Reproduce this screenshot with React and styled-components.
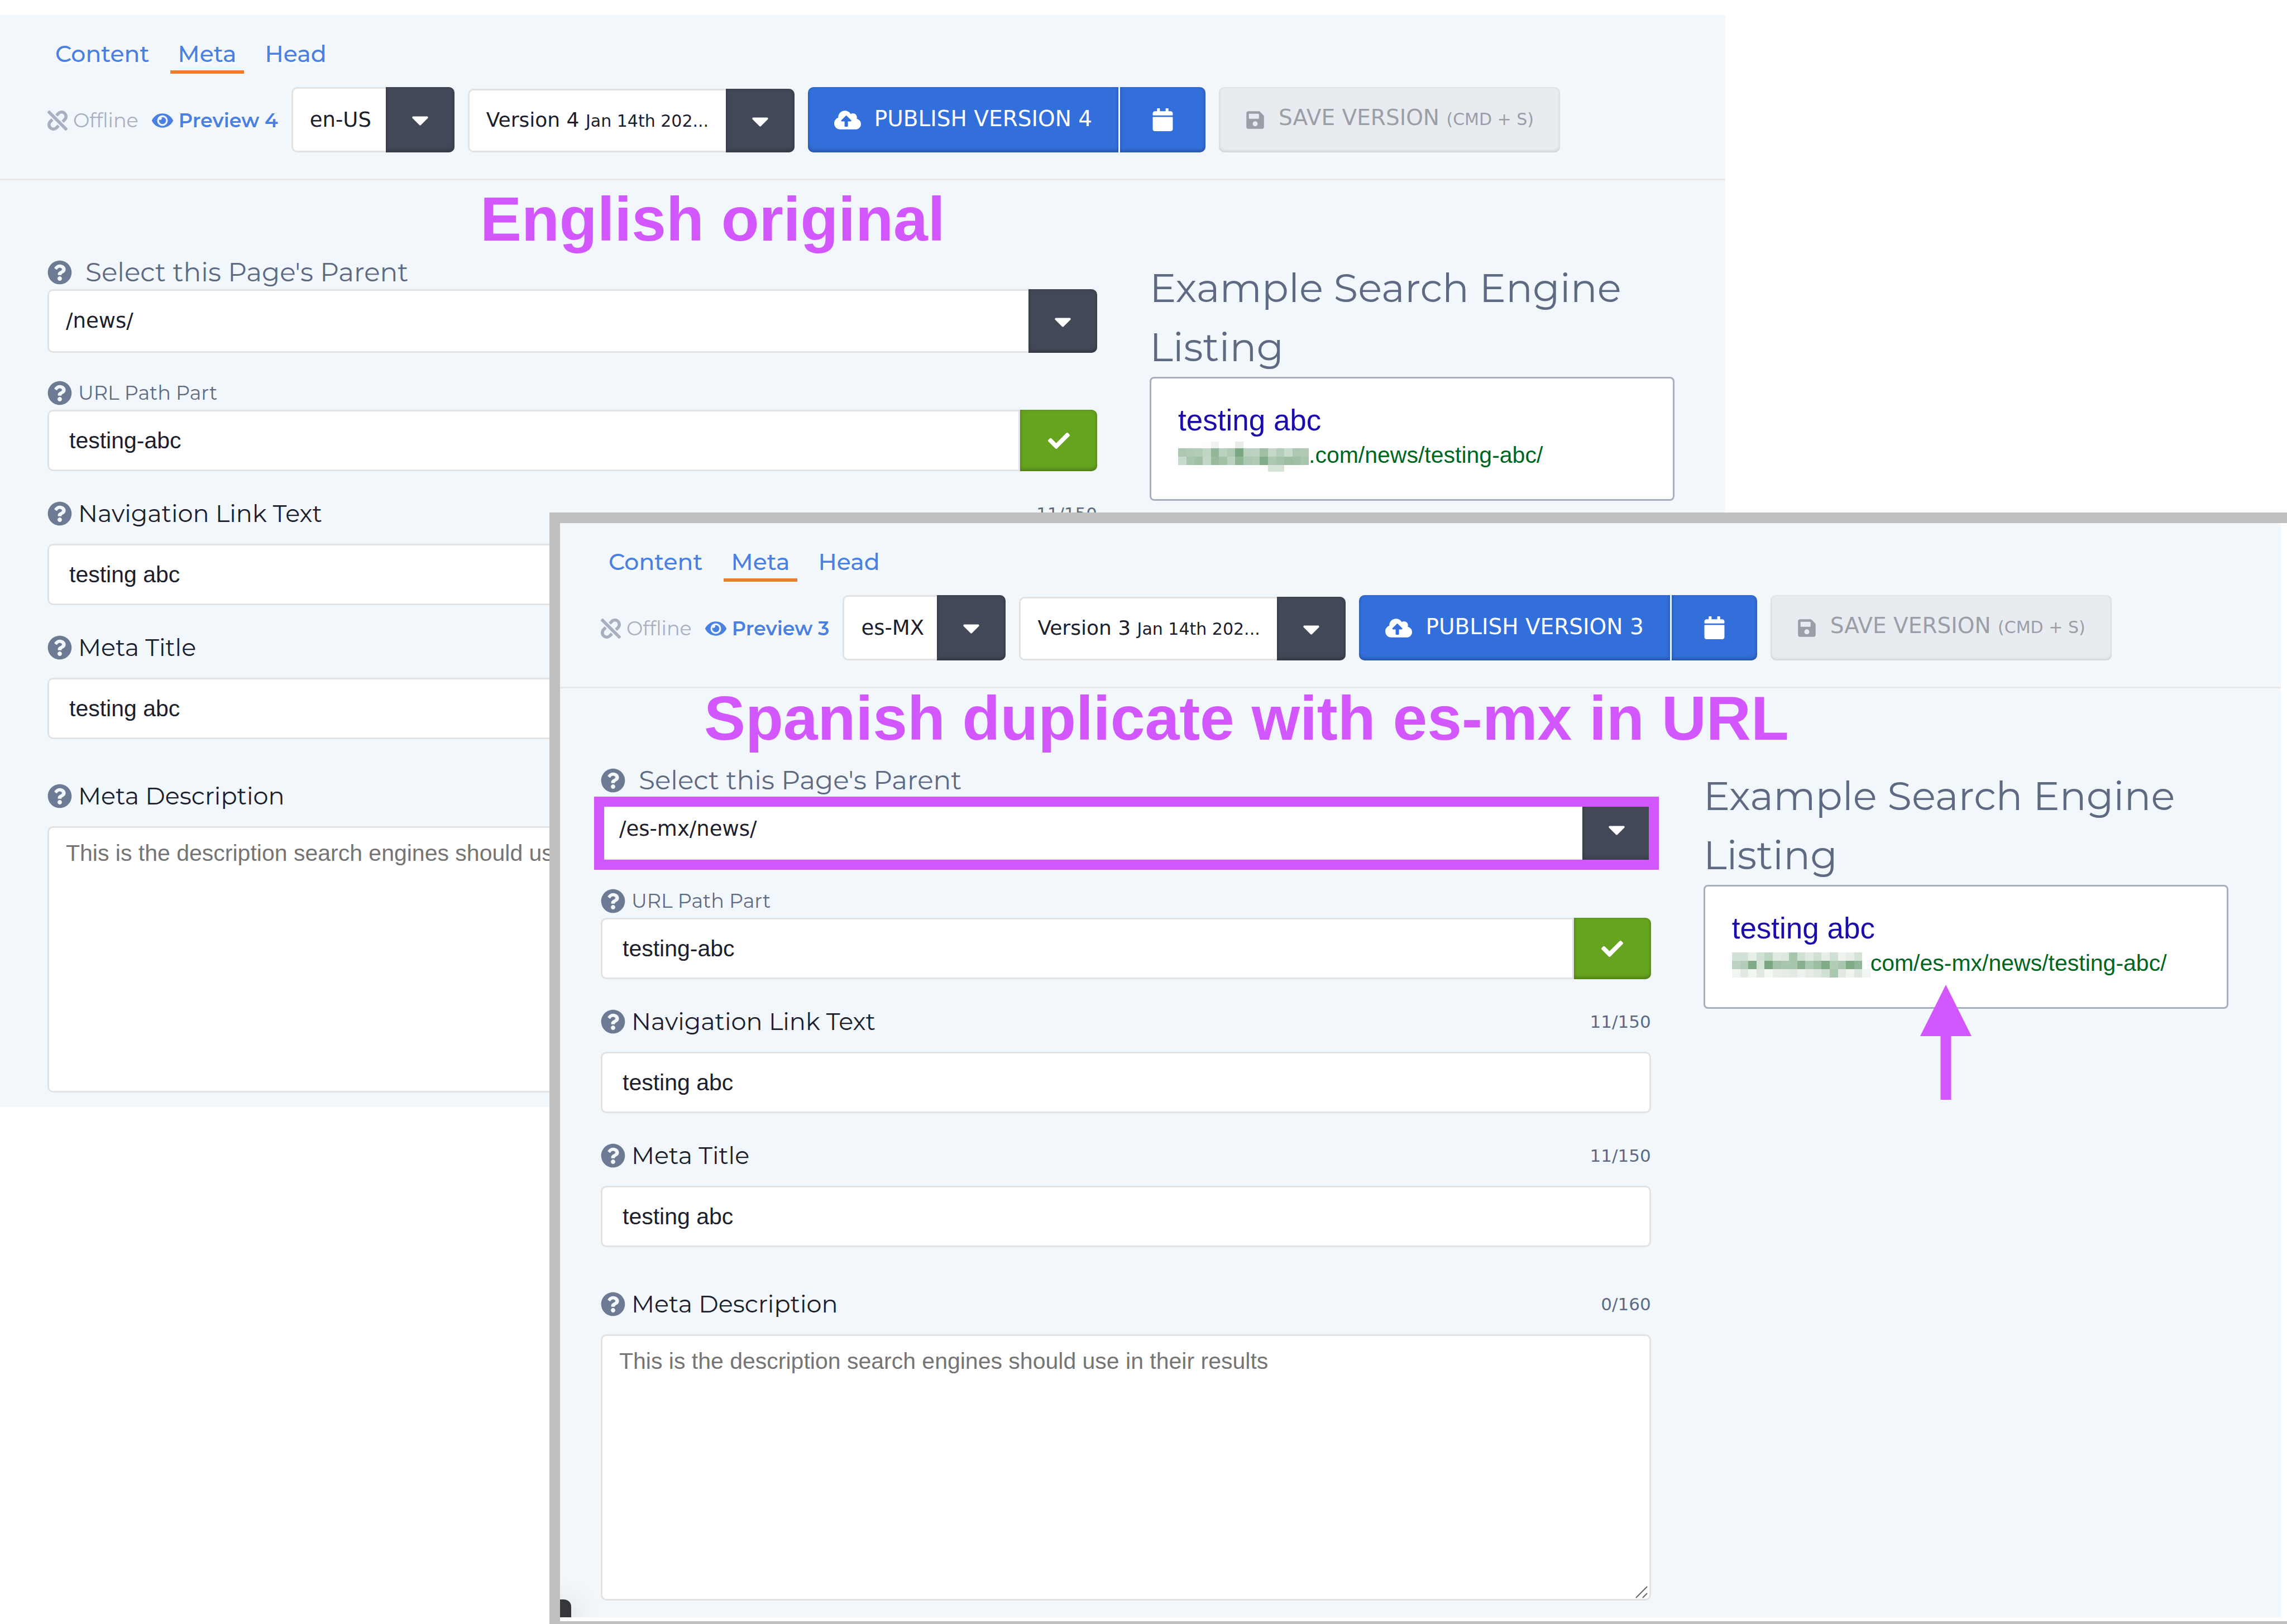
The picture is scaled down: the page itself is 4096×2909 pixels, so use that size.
import React from "react";
import styled, { createGlobalStyle } from "styled-components";
import {
  FaCalendar,
  FaCaretDown,
  FaCheck,
  FaCloudUploadAlt,
  FaEye,
  FaQuestionCircle,
  FaSave,
  FaUnlink,
} from "react-icons/fa";

const ink = "#1b202c";
const slate = "#5e6a82";
const link = "#4a80e1";
const charcoal = "#424857";
const line = "#e2e2e2";
const magenta = "#d257ff";

const brand = `Montserrat, "DejaVu Sans", sans-serif`;
const brandMedium = `Montserrat, Inter, sans-serif`;
const verdana = `Verdana, "DejaVu Sans", sans-serif`;
const arial = `Arial, "Liberation Sans", sans-serif`;

const GlobalStyle = createGlobalStyle`
  *, *::before, *::after { box-sizing: border-box; }
  body { margin: 0; background: #fff; }
  button, input, select, textarea { margin: 0; font: inherit; color: inherit; }
  svg { display: block; flex: none; }
`;

const Stage = styled.main`
  display: grid;
  grid-template-columns: minmax(0, 1fr);
  align-items: start;
  height: 100vh;
  overflow: hidden;
  color: ${ink};
  font-family: ${brand};
`;

const BackLayer = styled.div`
  grid-area: 1 / 1;
  margin: 27px 1006px 0 0;
`;

const FrontLayer = styled.div`
  grid-area: 1 / 1;
  z-index: 1;
  margin: 918px 0 0 984px;
  padding: 0 11px 7px 0;
  background: #fff;
  border: 19px solid #c0c0c0;
  border-right: 0;
`;

const Panel = styled.section`
  position: relative;
  overflow: hidden;
  background: #f2f7fb;
`;

const Header = styled.header`
  display: flex;
  flex-direction: column;
  gap: 24px;
  padding: 48px 0 47px ${(p) => p.$inset}px;
  border-bottom: 3px solid #e8e8e8;
`;

const Tabs = styled.nav`
  display: flex;
  gap: 23px;
`;

const Tab = styled.a`
  padding: 0 14px 8px;
  border-bottom: 6px solid ${(p) => (p.$active ? "#f47b2a" : "transparent")};
  color: ${link};
  font: 500 41px/43px ${brandMedium};
  text-decoration: none;
  text-shadow: 2px 3px 0 #fff;
`;

const Toolbar = styled.div`
  display: flex;
  align-items: flex-end;
  gap: 24px;
`;

const Status = styled.div`
  display: flex;
  align-items: center;
  gap: 24px;
  height: 114px;
  font: 400 35px/44px ${brandMedium};
`;

const Offline = styled.span`
  display: flex;
  align-items: center;
  gap: 10px;
  color: #a9afc0;
`;

const Preview = styled.a`
  display: flex;
  align-items: center;
  gap: 10px;
  color: ${link};
  font-weight: 600;
  text-decoration: none;
  text-shadow: 2px 3px 0 #fff;
`;

const Picker = styled.div`
  position: relative;
  width: ${(p) => p.$width};
  height: ${(p) => p.$height}px;
  font: 400 37px/44px ${verdana};
`;

const Select = styled.select`
  appearance: none;
  width: 100%;
  height: 100%;
  padding: 0 124px 0 30px;
  background: #fff;
  border: 3px solid ${line};
  border-radius: 10px;
`;

const VersionButton = styled.button`
  width: 100%;
  height: 100%;
  padding: 0 124px 0 30px;
  background: #fff;
  border: 3px solid ${line};
  border-radius: 10px;
  font-size: 36px;
  text-align: left;
  white-space: nowrap;
`;

const VersionDate = styled.span`
  font-size: 30px;
`;

const shade = `inset 0 -4px 6px rgba(0, 0, 0, 0.18), inset 0 0 5px rgba(0, 0, 0, 0.12)`;

const CaretBox = styled.span`
  position: absolute;
  top: 0;
  right: 0;
  display: grid;
  place-items: center;
  width: 123px;
  height: 100%;
  background: ${charcoal};
  border-radius: 0 10px 10px 0;
  box-shadow: ${shade};
  color: #fff;
  pointer-events: none;
`;

const Highlight = styled.span`
  position: absolute;
  inset: -1px -14px -16px -12px;
  border: 18px solid ${magenta};
  pointer-events: none;
`;

const ButtonPair = styled.div`
  display: flex;
  gap: 3px;
`;

const Button = styled.button`
  display: flex;
  align-items: center;
  justify-content: center;
  gap: 24px;
  height: 117px;
  padding: 0 ${(p) => (p.$wide ? 47 : 56)}px;
  background: #336fdb;
  border: 0;
  border-radius: ${(p) => p.$corners || "10px"};
  box-shadow: ${shade};
  color: #fff;
  font: 400 39px/48px ${verdana};
  white-space: nowrap;

  &:disabled {
    background: #e8ecf0;
    box-shadow: inset 0 -3px 5px rgba(0, 0, 0, 0.08), inset 0 0 4px rgba(0, 0, 0, 0.08);
    color: #9b9ea6;
  }
`;

const ButtonText = styled.span`
  padding-bottom: 4px;
`;

const Shortcut = styled.span`
  font-size: 30px;
`;

const Annotation = styled.h1`
  position: absolute;
  top: ${(p) => p.$top}px;
  left: ${(p) => p.$left}px;
  margin: 0;
  color: ${magenta};
  font: 700 111px/128px Helvetica, "Liberation Sans", sans-serif;
  white-space: nowrap;
`;

const Body = styled.div`
  display: grid;
  grid-template-columns: 2fr 1fr;
  align-items: start;
  gap: 94px;
  padding: 140px ${(p) => p.$right}px ${(p) => p.$bottom}px ${(p) => p.$inset}px;
`;

const Form = styled.form`
  padding-top: 3px;
`;

const Field = styled.div`
  margin-bottom: ${(p) => p.$after || 0}px;
`;

const LabelRow = styled.div`
  display: flex;
  align-items: center;
  height: 44px;
  margin-bottom: ${(p) => p.$gap}px;
  color: #6c7b93;
`;

const Label = styled.label`
  flex: 1;
  padding-left: ${(p) => (p.$size === 47 ? 24 : 11)}px;
  color: ${(p) => (p.$dark ? ink : slate)};
  font-size: ${(p) => p.$size}px;
  line-height: 44px;
`;

const Counter = styled.span`
  color: ${slate};
  font: 400 31px/44px ${verdana};
`;

const InputGroup = styled.div`
  display: flex;
`;

const Input = styled.input`
  flex: 1;
  width: 100%;
  min-width: 0;
  height: 110px;
  padding: 0 36px;
  background: #fff;
  border: 3px solid ${line};
  border-radius: ${(p) => (p.$joined ? "10px 0 0 10px" : "10px")};
  font: 400 41px/48px ${arial};
`;

const ConfirmButton = styled.button`
  display: grid;
  place-items: center;
  width: 138px;
  height: 110px;
  padding: 0;
  background: #66a31e;
  border: 0;
  border-radius: 0 10px 10px 0;
  box-shadow: ${shade};
  color: #fff;
`;

const TextBox = styled.div`
  position: relative;
`;

const TextArea = styled.textarea`
  display: block;
  width: 100%;
  height: 477px;
  padding: 21px 30px;
  background: #fff;
  border: 3px solid ${line};
  border-radius: 10px;
  font: 400 41px/48px ${arial};
  resize: none;

  &::placeholder { color: #757575; opacity: 1; }
`;

const Grip = styled.svg`
  position: absolute;
  right: 6px;
  bottom: 4px;
`;

const ListingTitle = styled.h2`
  margin: 0;
  color: ${slate};
  font: 400 71px/106px ${brand};
`;

const Card = styled.div`
  position: relative;
  padding: 44px 48px 48px;
  background: #fff;
  border: 3px solid #a7afc1;
  border-radius: 8px;
  font-family: ${arial};
`;

const ResultLink = styled.a`
  display: block;
  color: #1a0dab;
  font-size: 53px;
  line-height: 62px;
  text-decoration: none;
`;

const ResultUrl = styled.div`
  display: flex;
  align-items: center;
  height: 62px;
  color: #006621;
  font-size: 41px;
  white-space: nowrap;
`;

const MosaicArt = styled.svg`
  margin-top: 6px;
`;

const Arrow = styled.svg`
  position: absolute;
  top: 176px;
  left: 385px;
`;

const CornerTab = styled.span`
  position: absolute;
  bottom: 0;
  left: 0;
  width: 20px;
  height: 32px;
  background: #36373b;
  border-radius: 0 13px 0 0;
  box-shadow: 0 8px 50px rgba(0, 0, 0, 0.3);
`;

const englishMosaic = {
  cols: 16,
  width: 234,
  height: 54,
  rows: [
    { y: 0, h: 12, c: [, , , "#fdfdfd", "#f0f4f1", , , "#e7eee8"] },
    { y: 12, h: 15, c: ["#adc7b1", "#b0cab5", "#b2ccb6", "#c0d5c3", "#92b699", "#bbd1bf", "#aecab3", "#7ba883", "#bcd2c0", "#bed3c1", "#a0c0a6", "#c5d7c8", "#b5ceb9", "#c8dacb", "#adc8b2", "#b0cab4"] },
    { y: 27, h: 15, c: ["#c8dacb", "#a8c5ad", "#a1c1a6", "#c3d7c6", "#98ba9e", "#a2c2a8", "#bcd2c0", "#90b596", "#adc8b2", "#b0cab4", "#82ad8a", "#adc8b2", "#a4c3aa", "#9cbda2", "#a0c0a6", "#a8c5ad"] },
    { y: 42, h: 12, c: [, , , , , , , , , , , "#d5e3d7", "#d5e3d7"] },
  ],
};

const spanishMosaic = {
  cols: 17,
  width: 248,
  height: 45,
  rows: [
    { y: 0, h: 15, c: ["#d3e2d6", "#d3e2d6", "#e8efe9", "#d0e0d3", "#bfd5c3", "#e0eae2", "#dce7de", "#a8c6ad", "#d0e0d3", "#e0eae2", "#d0e0d3", "#e6eee7", "#d0e0d3", "#eef3ef", "#e6eee7", "#d5e3d7"] },
    { y: 15, h: 15, c: ["#bdd2c0", "#b3ccb7", "#7eaa86", "#d5e3d7", "#7aa782", "#a2c1a8", "#a8c5ad", "#a8c5ad", "#88b090", "#aac7af", "#9dbea3", "#7eaa86", "#b3ccb7", "#a8c5ad", "#7eaa86", "#92b699"] },
    { y: 30, h: 15, c: ["#f2f6f3", "#e0eae2", "#f2f6f3", "#dfe9e0", "#f5f8f5", "#e8efe9", "#e5ede6", "#e2ebe3", "#ecf2ed", "#e5ede6", "#dde8de", "#d0e0d3", "#aac7af", "#e0eae2", "#f0f4f1", "#dde8de", "#f2f6f3"] },
  ],
};

function Mosaic({ art }) {
  return (
    <MosaicArt
      width={art.width}
      height={art.height}
      viewBox={`0 0 ${art.cols} ${art.height}`}
      preserveAspectRatio="none"
      shapeRendering="crispEdges"
      aria-hidden="true"
    >
      {art.rows.flatMap((row) =>
        row.c.map((fill, x) => (
          <rect key={`${row.y}-${x}`} x={x} y={row.y} width="1" height={row.h} fill={fill} />
        ))
      )}
    </MosaicArt>
  );
}

function Caret() {
  return (
    <CaretBox aria-hidden="true">
      <FaCaretDown size={49} />
    </CaretBox>
  );
}

function FieldLabel({ id, gap, size, dark, count, children }) {
  return (
    <LabelRow $gap={gap}>
      <FaQuestionCircle size={44} />
      <Label htmlFor={id} $size={size} $dark={dark}>
        {children}
      </Label>
      {count && <Counter>{count}</Counter>}
    </LabelRow>
  );
}

function Editor({ data, children }) {
  const { id, inset } = data;
  return (
    <Panel>
      <Header $inset={inset}>
        <Tabs>
          <Tab href="#content">Content</Tab>
          <Tab href="#meta" $active aria-current="page">Meta</Tab>
          <Tab href="#head">Head</Tab>
        </Tabs>
        <Toolbar>
          <Status>
            <Offline>
              <FaUnlink size={36} />
              Offline
            </Offline>
            <Preview href="#preview">
              <FaEye size={38} />
              Preview {data.version}
            </Preview>
          </Status>
          <Picker $width="292px" $height={117}>
            <Select aria-label="Language" defaultValue={data.locale}>
              <option>{data.locale}</option>
            </Select>
            <Caret />
          </Picker>
          <Picker $width="585px" $height={114}>
            <VersionButton type="button" aria-haspopup="listbox">
              Version {data.version} <VersionDate>Jan 14th 202...</VersionDate>
            </VersionButton>
            <Caret />
          </Picker>
          <ButtonPair>
            <Button type="button" $wide $corners="10px 0 0 10px">
              <FaCloudUploadAlt size={48} />
              <ButtonText>PUBLISH VERSION {data.version}</ButtonText>
            </Button>
            <Button type="button" $corners="0 10px 10px 0" aria-label="Schedule">
              <FaCalendar size={41} />
            </Button>
          </ButtonPair>
          <Button type="button" $wide disabled>
            <FaSave size={36} />
            <ButtonText>
              SAVE VERSION <Shortcut>(CMD + S)</Shortcut>
            </ButtonText>
          </Button>
        </Toolbar>
      </Header>

      <Annotation $top={data.titleTop} $left={data.titleLeft}>{data.title}</Annotation>

      <Body $inset={inset} $right={data.right} $bottom={data.bottom}>
        <Form>
          <Field $after={50}>
            <FieldLabel id={`${id}-parent`} gap={8} size={47}>Select this Page's Parent</FieldLabel>
            <Picker $width="100%" $height={114}>
              <Select id={`${id}-parent`} defaultValue={data.parent}>
                <option>{data.parent}</option>
              </Select>
              <Caret />
              {data.highlight && <Highlight />}
            </Picker>
          </Field>
          <Field $after={54}>
            <FieldLabel id={`${id}-path`} gap={8} size={35}>URL Path Part</FieldLabel>
            <InputGroup>
              <Input id={`${id}-path`} $joined defaultValue="testing-abc" />
              <ConfirmButton type="button" aria-label="Confirm path">
                <FaCheck size={39} />
              </ConfirmButton>
            </InputGroup>
          </Field>
          <Field $after={54}>
            <FieldLabel id={`${id}-nav`} gap={32} size={43} dark count="11/150">Navigation Link Text</FieldLabel>
            <Input id={`${id}-nav`} defaultValue="testing abc" />
          </Field>
          <Field $after={80}>
            <FieldLabel id={`${id}-title`} gap={32} size={43} dark count="11/150">Meta Title</FieldLabel>
            <Input id={`${id}-title`} defaultValue="testing abc" />
          </Field>
          <Field>
            <FieldLabel id={`${id}-desc`} gap={32} size={43} dark count="0/160">Meta Description</FieldLabel>
            <TextBox>
              <TextArea
                id={`${id}-desc`}
                placeholder="This is the description search engines should use in their results"
              />
              <Grip width="22" height="22" viewBox="0 0 22 22" stroke="#666" strokeWidth="2" aria-hidden="true">
                <path d="M1 21 21 1M13 21l8-8" />
              </Grip>
            </TextBox>
          </Field>
        </Form>

        <aside>
          <ListingTitle>Example Search Engine Listing</ListingTitle>
          <Card>
            <ResultLink href="#result">testing abc</ResultLink>
            <ResultUrl>
              <Mosaic art={data.mosaic} />
              {data.url}
            </ResultUrl>
            {data.highlight && (
              <Arrow width="92" height="206" viewBox="0 0 92 206" fill={magenta} aria-hidden="true">
                <path d="M46 0 92 92H55.500V206H36.500V92H0z" />
              </Arrow>
            )}
          </Card>
        </aside>
      </Body>
      {children}
    </Panel>
  );
}

const english = {
  id: "en",
  inset: 85,
  right: 91,
  bottom: 26,
  version: 4,
  locale: "en-US",
  parent: "/news/",
  url: ".com/news/testing-abc/",
  title: "English original",
  titleTop: 302,
  titleLeft: 860,
  mosaic: englishMosaic,
};

const spanish = {
  id: "es",
  inset: 73,
  right: 94,
  bottom: 30,
  version: 3,
  locale: "es-MX",
  parent: "/es-mx/news/",
  url: "com/es-mx/news/testing-abc/",
  title: "Spanish duplicate with es-mx in URL",
  titleTop: 286,
  titleLeft: 258,
  mosaic: spanishMosaic,
  highlight: true,
};

export default function App() {
  return (
    <Stage>
      <GlobalStyle />
      <BackLayer>
        <Editor data={english} />
      </BackLayer>
      <FrontLayer>
        <Editor data={spanish}>
          <CornerTab />
        </Editor>
      </FrontLayer>
    </Stage>
  );
}
